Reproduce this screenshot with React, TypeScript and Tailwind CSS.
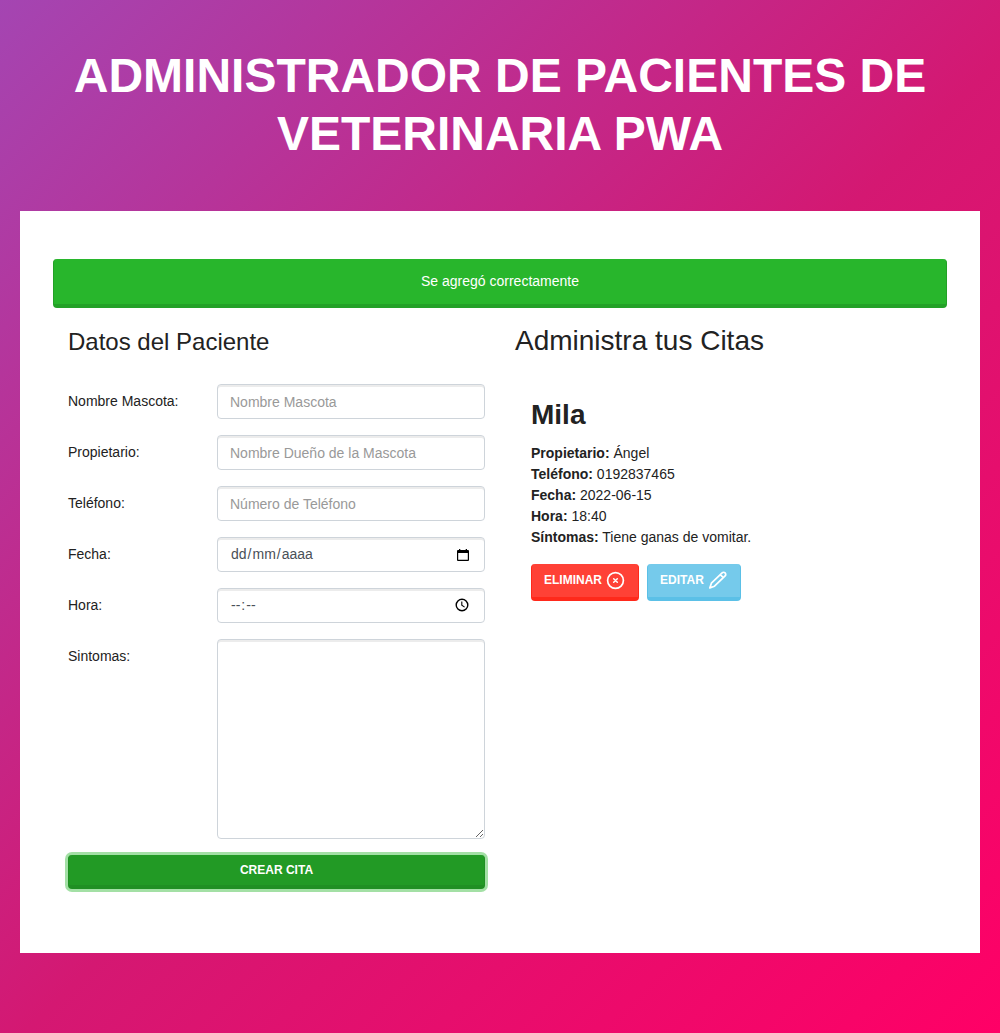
import React from 'react';

const control =
  'flex h-[35px] w-[268px] items-center justify-between rounded-[4px] border border-[#ced4da] bg-white px-3 text-[14px] leading-[21px] text-[#495057] shadow-[inset_0_2px_0_rgba(0,0,0,0.075)] outline-none placeholder:text-[#999999] placeholder:opacity-100';

function Row({ label, children, last = false }: { label: string; children: React.ReactNode; last?: boolean }) {
  return (
    <div className={last ? 'flex items-start' : 'mb-4 flex items-start'}>
      <label className="w-[149px] pt-[7px] text-[14px] leading-[21px]">{label}</label>
      {children}
    </div>
  );
}

function CalendarIcon() {
  return (
    <svg width="14" height="14" viewBox="0 0 14 14" className="mr-[2px]">
      <path
        fill="#000"
        fillRule="evenodd"
        d="M3 1h1.3v1h5.4V1H11v1h1q1 0 1 1v9q0 1-1 1H2q-1 0-1-1V3q0-1 1-1h1zM2.2 5v6.8h9.6V5z"
      />
    </svg>
  );
}

function ClockIcon() {
  return (
    <svg width="14" height="14" viewBox="0 0 14 14" fill="none" stroke="#000" className="mr-[3px] mb-px">
      <circle cx="7" cy="7" r="5.8" strokeWidth="1.4" />
      <path d="M6.8 3.5v3.8l2.8 1.8" strokeWidth="1.1" />
    </svg>
  );
}

function CircleXIcon() {
  return (
    <svg width="20" height="20" viewBox="0 0 20 20" fill="none" stroke="#fff" strokeLinecap="round">
      <circle cx="9.5" cy="10.5" r="7.9" strokeWidth="1.7" />
      <path d="M7.7 8.7l3.6 3.6M11.3 8.7l-3.6 3.6" strokeWidth="1.5" />
    </svg>
  );
}

function PencilIcon() {
  return (
    <svg
      width="20"
      height="20"
      viewBox="0 0 20 20"
      fill="none"
      stroke="#fff"
      strokeWidth="1.7"
      strokeLinecap="round"
      strokeLinejoin="round"
    >
      <path d="M3.4 13.2L14.1 2.9a2 2 0 0 1 3 3L6.5 16.2 1.8 17.9zM12.3 4.7l3 3" />
    </svg>
  );
}

const details = [
  ['Propietario:', 'Ángel'],
  ['Teléfono:', '0192837465'],
  ['Fecha:', '2022-06-15'],
  ['Hora:', '18:40'],
  ['Síntomas:', 'Tiene ganas de vomitar.'],
];

export default function App() {
  return (
    <div className="h-[1033px] bg-[linear-gradient(135deg,#a445b2,#d41872_52%,#ff0066)] px-5 font-['Liberation_Sans',Arial,sans-serif] text-[14px] leading-[21px] text-[#222222]">
      <h1 className="pt-[47px] pb-[49px] text-center text-[48px] leading-[57.6px] font-bold text-white uppercase">
        Administrador de Pacientes de Veterinaria PWA
      </h1>
      <main className="h-[742px] bg-white px-[33px] pt-12">
        <div className="h-[49px] rounded-[4px] border border-t-0 border-b-4 border-[#23a127] bg-[#28b62c] pt-3 text-center text-white">
          Se agregó correctamente
        </div>
        <div className="flex">
          <form className="w-[447px] px-[15px] pt-[16px]">
            <h2 className="mb-[24px] text-[24px] leading-[36px]">Datos del Paciente</h2>
            <Row label="Nombre Mascota:">
              <input className={control} placeholder="Nombre Mascota" />
            </Row>
            <Row label="Propietario:">
              <input className={control} placeholder="Nombre Dueño de la Mascota" />
            </Row>
            <Row label="Teléfono:">
              <input className={control} placeholder="Número de Teléfono" />
            </Row>
            <Row label="Fecha:">
              <div className={control}>
                <span className="flex pl-px">
                  <span>dd</span>
                  <span className="px-px">/</span>
                  <span>mm</span>
                  <span className="px-px">/</span>
                  <span>aaaa</span>
                </span>
                <CalendarIcon />
              </div>
            </Row>
            <Row label="Hora:">
              <div className={control}>
                <span className="flex pl-px">
                  <span>--</span>
                  <span className="px-px">:</span>
                  <span>--</span>
                </span>
                <ClockIcon />
              </div>
            </Row>
            <Row label="Sintomas:" last>
              <textarea className="h-[200px] w-[268px] resize rounded-[4px] border border-[#ced4da] px-3 py-1.5 shadow-[inset_0_2px_0_rgba(0,0,0,0.075)]" />
            </Row>
            <button
              type="button"
              className="mt-4 block h-[34px] w-full rounded-[4px] border border-t-0 border-b-4 border-[#208f23] bg-[#229a25] text-[12px] leading-[18px] font-bold text-white uppercase shadow-[0_0_0_3px_rgba(72,193,76,0.5)]"
            >
              Crear cita
            </button>
          </form>
          <section className="pt-4 pl-[15px]">
            <h2 className="text-[28px] leading-[33.6px]">Administra tus Citas</h2>
            <article className="pt-[40px] pl-4">
              <h3 className="mb-[11.5px] text-[28px] leading-[33.6px] font-bold">Mila</h3>
              {details.map(([name, value]) => (
                <p key={name}>
                  <b>{name}</b> {value}
                </p>
              ))}
              <div className="mt-4 flex gap-2">
                <button
                  type="button"
                  className="flex h-[37px] w-[108px] items-center justify-center gap-1 rounded-[4px] border border-t-0 border-b-4 border-[#ff291b] bg-[#ff4136] text-[12px] font-bold text-white uppercase"
                >
                  Eliminar
                  <CircleXIcon />
                </button>
                <button
                  type="button"
                  className="flex h-[37px] w-[94px] items-center justify-center gap-1 rounded-[4px] border border-t-0 border-b-4 border-[#5bc0e7] bg-[#75caeb] text-[12px] font-bold text-white uppercase"
                >
                  Editar
                  <PencilIcon />
                </button>
              </div>
            </article>
          </section>
        </div>
      </main>
    </div>
  );
}
